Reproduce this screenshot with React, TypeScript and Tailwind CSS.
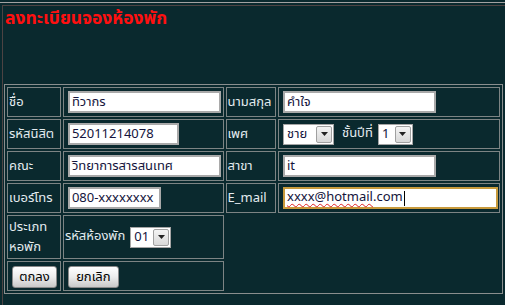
import React from "react";

const font = { fontFamily: "Tahoma, 'Noto Sans Thai', 'Liberation Sans', 'DejaVu Sans', sans-serif" };

function Select({ value, w }: { value: string; w: string }) {
  return (
    <span className={`inline-flex items-center h-[21px] bg-white border border-[#a5a5a5] ${w} align-middle`}>
      <span className="flex-1 pl-[3px] text-[13px] text-[#14143c] leading-none">{value}</span>
      <span className="w-[16px] h-[17px] mr-[1px] flex items-center justify-center bg-gradient-to-b from-[#f4f4f4] to-[#d8d8d8] border border-[#a0a0a0] rounded-[2px]">
        <svg width="7" height="4" viewBox="0 0 7 4"><path d="M0 0h7L3.5 4z" fill="#222" /></svg>
      </span>
    </span>
  );
}

function Btn({ label, w }: { label: string; w: string }) {
  return (
    <button className={`${w} h-[22px] rounded-[3px] border border-[#8a8a8a] bg-gradient-to-b from-[#ffffff] via-[#ececec] to-[#c9c9c9] text-[13px] text-black leading-none`}>{label}</button>
  );
}

const cell = "border border-[#7d8484] p-[1px] align-middle";
const lbl = `${cell} text-[13px] text-[#e4ecf0] leading-[18px]`;
const inp = "h-[22px] bg-white border-2 border-[#a9a9a9] px-[2px] text-[13px] text-[#14143c] outline-none ml-[3px] block";

export default function App() {
  return (
    <div className="w-[505px] h-[305px] bg-[#0a292e] overflow-hidden pt-[2px]" style={font}>
      <div className="border-t border-[#a2a2a2] pt-[2px]">
        <div className="ml-[2px] border-t border-l border-[#4d4343] h-[300px]">
          <div className="h-[78px] pl-[2px] pt-[3px]">
            <h1 className="text-[17.5px] font-bold text-[#ff1010] leading-[20px]">ลงทะเบียนจองห้องพัก</h1>
          </div>
          <table className="ml-[1px] border border-[#8a8e8e] border-separate border-spacing-[2px] w-[499px]">
            <tbody>
              <tr className="h-[30px]">
                <td className={`${lbl} w-[55px]`}>ชื่อ</td>
                <td className={`${cell} w-[161px]`}><div className={`${inp} w-[153px]`}>ทิวากร</div></td>
                <td className={`${lbl} w-[52px]`}>นามสกุล</td>
                <td className={cell}><div className={`${inp} w-[153px]`}>คำใจ</div></td>
              </tr>
              <tr className="h-[30px]">
                <td className={lbl}>รหัสนิสิต</td>
                <td className={cell}><div className={`${inp} w-[111px]`}>52011214078</div></td>
                <td className={lbl}>เพศ</td>
                <td className={cell}>
                  <div className="flex items-center ml-[3px]">
                    <Select value="ชาย" w="w-[51px]" />
                    <span className="ml-[8px] mr-[5px] text-[13px] text-[#e4ecf0]">ชั้นปีที่</span>
                    <Select value="1" w="w-[35px]" />
                  </div>
                </td>
              </tr>
              <tr className="h-[30px]">
                <td className={lbl}>คณะ</td>
                <td className={cell}><div className={`${inp} w-[153px]`}>วิทยาการสารสนเทศ</div></td>
                <td className={lbl}>สาขา</td>
                <td className={cell}><div className={`${inp} w-[153px]`}>it</div></td>
              </tr>
              <tr className="h-[30px]">
                <td className={lbl}>เบอร์โทร</td>
                <td className={cell}><div className={`${inp} w-[93px]`}>080-xxxxxxxx</div></td>
                <td className={lbl}>E_mail</td>
                <td className={cell}>
                  <div className={`${inp} w-[215px] !border-[#c89a3c] flex items-center`}>
                    <span className="underline decoration-wavy decoration-[#e02020] decoration-1 underline-offset-2">xxxx@hotmail</span>
                    <span>.com</span>
                    <span className="w-px h-[15px] bg-black ml-[1px]" />
                  </div>
                </td>
              </tr>
              <tr className="h-[42px]">
                <td className={`${lbl} !leading-[20px]`}>ประเภท<br />หอพัก</td>
                <td className={cell}>
                  <div className="flex items-center">
                    <span className="text-[13px] text-[#e4ecf0] mr-[5px]">รหัสห้องพัก</span>
                    <Select value="01" w="w-[41px]" />
                  </div>
                </td>
              </tr>
              <tr className="h-[30px]">
                <td className={cell}><div className="ml-[3px]"><Btn label="ตกลง" w="w-[45px]" /></div></td>
                <td className={cell}><div className="ml-[3px]"><Btn label="ยกเลิก" w="w-[51px]" /></div></td>
              </tr>
            </tbody>
          </table>
        </div>
      </div>
    </div>
  );
}
